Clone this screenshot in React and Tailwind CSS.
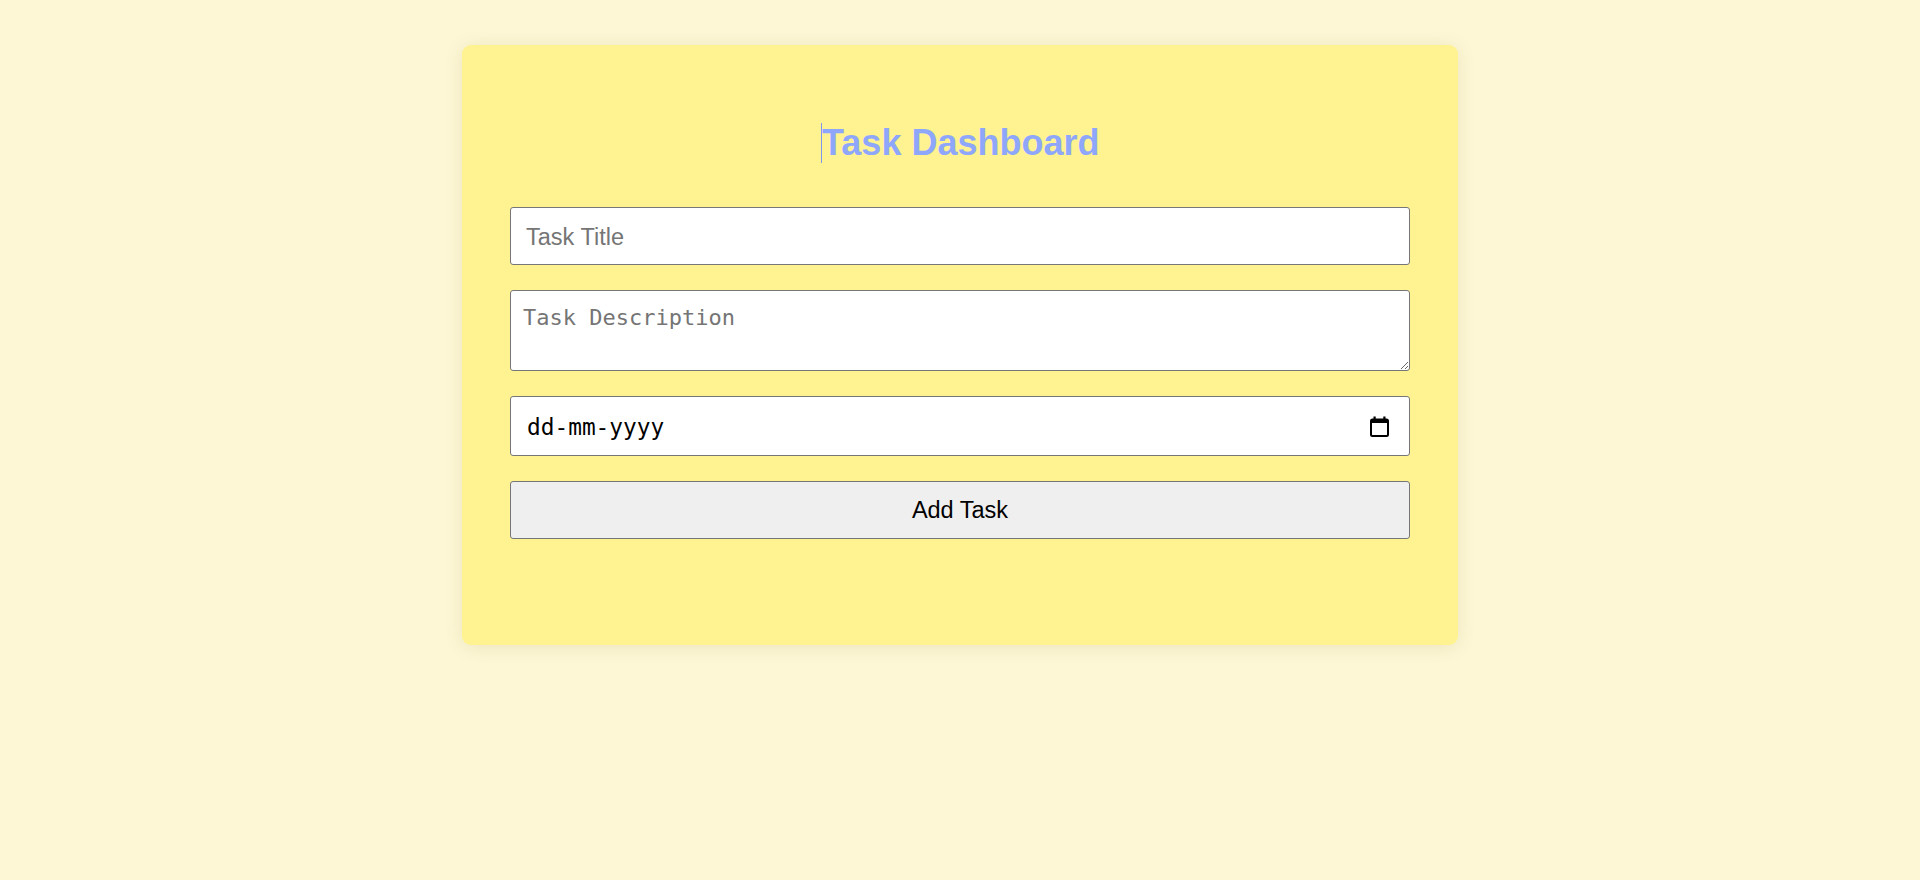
export default function App() {
  return (
    <div className="min-h-[880px] w-full bg-[#fdf7d6] pt-[45px] font-['Liberation_Sans',Arial,sans-serif]">
      <div className="mx-auto flex h-[600px] w-[996px] flex-col rounded-[9px] bg-[#fff391] px-[48px] pt-[78px] pb-[106px] shadow-[0_2px_18px_rgba(120,100,0,0.12)]">
        <h1 className="mb-[44px] flex h-[40px] items-center justify-center text-[36px] font-bold leading-[40px] text-[#8fa7fb]">
          <span className="inline-block h-[40px] w-[1.5px] bg-[#7f97f0]"></span>
          <span>Task Dashboard</span>
        </h1>
        <div className="flex flex-col gap-[25px]">
          <input
            type="text"
            placeholder="Task Title"
            className="h-[58px] w-full rounded-[3px] border border-[#767676] bg-white px-[15px] pt-[3px] font-['Liberation_Sans',Arial,sans-serif] text-[23.5px] text-black outline-none placeholder:text-[#757575]"
          />
          <textarea
            placeholder="Task Description"
            className="block h-[81px] w-full resize-y rounded-[3px] border border-[#767676] bg-white px-[12px] pt-[14px] font-['DejaVu_Sans_Mono',monospace] text-[22px] leading-[26px] text-black outline-none placeholder:text-[#757575]"
          />
          <div className="flex h-[60px] w-full items-center justify-between rounded-[3px] border border-[#767676] bg-white pl-[16px] pr-[20px]">
            <span className="pt-[2px] font-['DejaVu_Sans_Mono',monospace] text-[22.8px] text-black">dd-mm-yyyy</span>
            <svg width="19" height="21" viewBox="0 0 19 21" className="block">
              <rect x="1" y="3.5" width="17" height="16.5" rx="1.5" fill="none" stroke="#000" strokeWidth="2" />
              <rect x="1" y="3" width="17" height="4" fill="#000" />
              <rect x="3.5" y="0.5" width="2.2" height="4" fill="#000" />
              <rect x="13.3" y="0.5" width="2.2" height="4" fill="#000" />
            </svg>
          </div>
          <button
            type="button"
            className="h-[58px] w-full rounded-[3px] border border-[#767676] bg-[#efefef] pt-[2px] font-['Liberation_Sans',Arial,sans-serif] text-[23.5px] text-black"
          >
            Add Task
          </button>
        </div>
      </div>
    </div>
  );
}
